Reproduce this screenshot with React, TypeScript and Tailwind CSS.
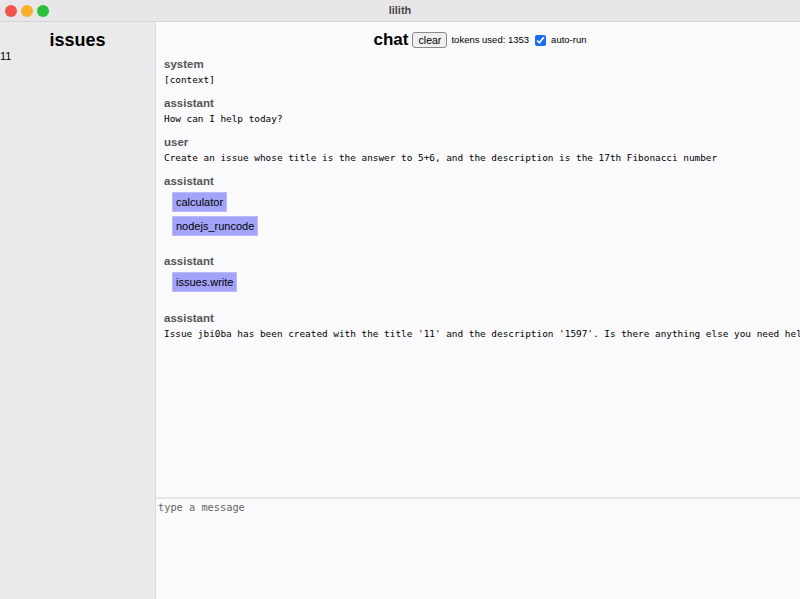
import React from "react";

const sans = { fontFamily: '"Liberation Sans", Arial, sans-serif' };
const mono = { fontFamily: '"DejaVu Sans Mono", monospace' };

function Label({ children }: { children: React.ReactNode }) {
  return <div className="text-[11.5px] font-bold text-[#555] leading-[14px]" style={sans}>{children}</div>;
}
function Mono({ children }: { children: React.ReactNode }) {
  return <div className="text-[9.4px] text-black leading-[14px] whitespace-nowrap mt-[2px]" style={mono}>{children}</div>;
}
function Chip({ children }: { children: React.ReactNode }) {
  return (
    <div className="flex ml-[8px]">
      <div className="bg-[#a3a3fa] border border-[#b9b9fb] text-[11px] text-black px-[3px] h-[20px] flex items-center" style={sans}>{children}</div>
    </div>
  );
}

export default function App() {
  return (
    <div className="w-[800px] h-[599px] flex flex-col overflow-hidden bg-[#fbfafc]" style={sans}>
      <div className="h-[22px] shrink-0 bg-[#e8e6e8] border-b border-[#d6d4d6] flex items-center relative">
        <div className="flex gap-[4px] pl-[5px]">
          <span className="w-[12px] h-[12px] rounded-full bg-[#f0544c] inline-block" />
          <span className="w-[12px] h-[12px] rounded-full bg-[#f8b02a] inline-block" />
          <span className="w-[12px] h-[12px] rounded-full bg-[#2ac23c] inline-block" />
        </div>
        <div className="absolute left-0 right-0 text-center text-[11px] font-bold text-[#4a4a4a]">lilith</div>
      </div>
      <div className="flex flex-1 min-h-0">
        <div className="w-[156px] shrink-0 bg-[#ebeaeb] border-r border-[#dcdadc]">
          <div className="text-center text-[18px] font-bold text-black leading-[22px] mt-[7px]">issues</div>
          <div className="text-[11px] text-black leading-[13px] mt-[-1px]">11</div>
        </div>
        <div className="flex-1 flex flex-col min-w-0">
          <div className="flex-1 min-h-0 overflow-hidden">
            <div className="flex items-center justify-center mt-[7px] h-[22px] pl-[4px]">
              <span className="text-[17px] font-bold text-black leading-[22px]">chat</span>
              <button className="ml-[4px] h-[16px] w-[35px] border border-[#8a8a8a] rounded-[3px] bg-[#efefef] text-[10.5px] text-black leading-none">clear</button>
              <span className="ml-[4px] text-[9.5px] text-black">tokens used: 1353</span>
              <input type="checkbox" defaultChecked className="ml-[6px] w-[11px] h-[11px] accent-[#1a6ef5]" />
              <span className="ml-[5px] text-[9.5px] text-black">auto-run</span>
            </div>
            <div className="pl-[8px] pt-[6px] flex flex-col">
              <div>
                <Label>system</Label>
                <Mono>[context]</Mono>
              </div>
              <div className="mt-[9px]">
                <Label>assistant</Label>
                <Mono>How can I help today?</Mono>
              </div>
              <div className="mt-[9px]">
                <Label>user</Label>
                <Mono>Create an issue whose title is the answer to 5+6, and the description is the 17th Fibonacci number</Mono>
              </div>
              <div className="mt-[9px]">
                <Label>assistant</Label>
                <div className="mt-[4px] flex flex-col gap-[4px]">
                  <Chip>calculator</Chip>
                  <Chip>nodejs_runcode</Chip>
                </div>
              </div>
              <div className="mt-[18px]">
                <Label>assistant</Label>
                <div className="mt-[4px] flex flex-col gap-[4px]">
                  <Chip>issues.write</Chip>
                </div>
              </div>
              <div className="mt-[19px]">
                <Label>assistant</Label>
                <Mono>Issue jbi0ba has been created with the title '11' and the description '1597'. Is there anything else you need help with?</Mono>
              </div>
            </div>
          </div>
          <textarea
            placeholder="type a message"
            className="h-[102px] shrink-0 w-full border-t-2 border-[#e6e4e6] bg-[#fbfafc] px-[2px] py-[1px] text-[10.3px] leading-[14px] resize-none outline-none placeholder:text-[#666]"
            style={mono}
          />
        </div>
      </div>
    </div>
  );
}
